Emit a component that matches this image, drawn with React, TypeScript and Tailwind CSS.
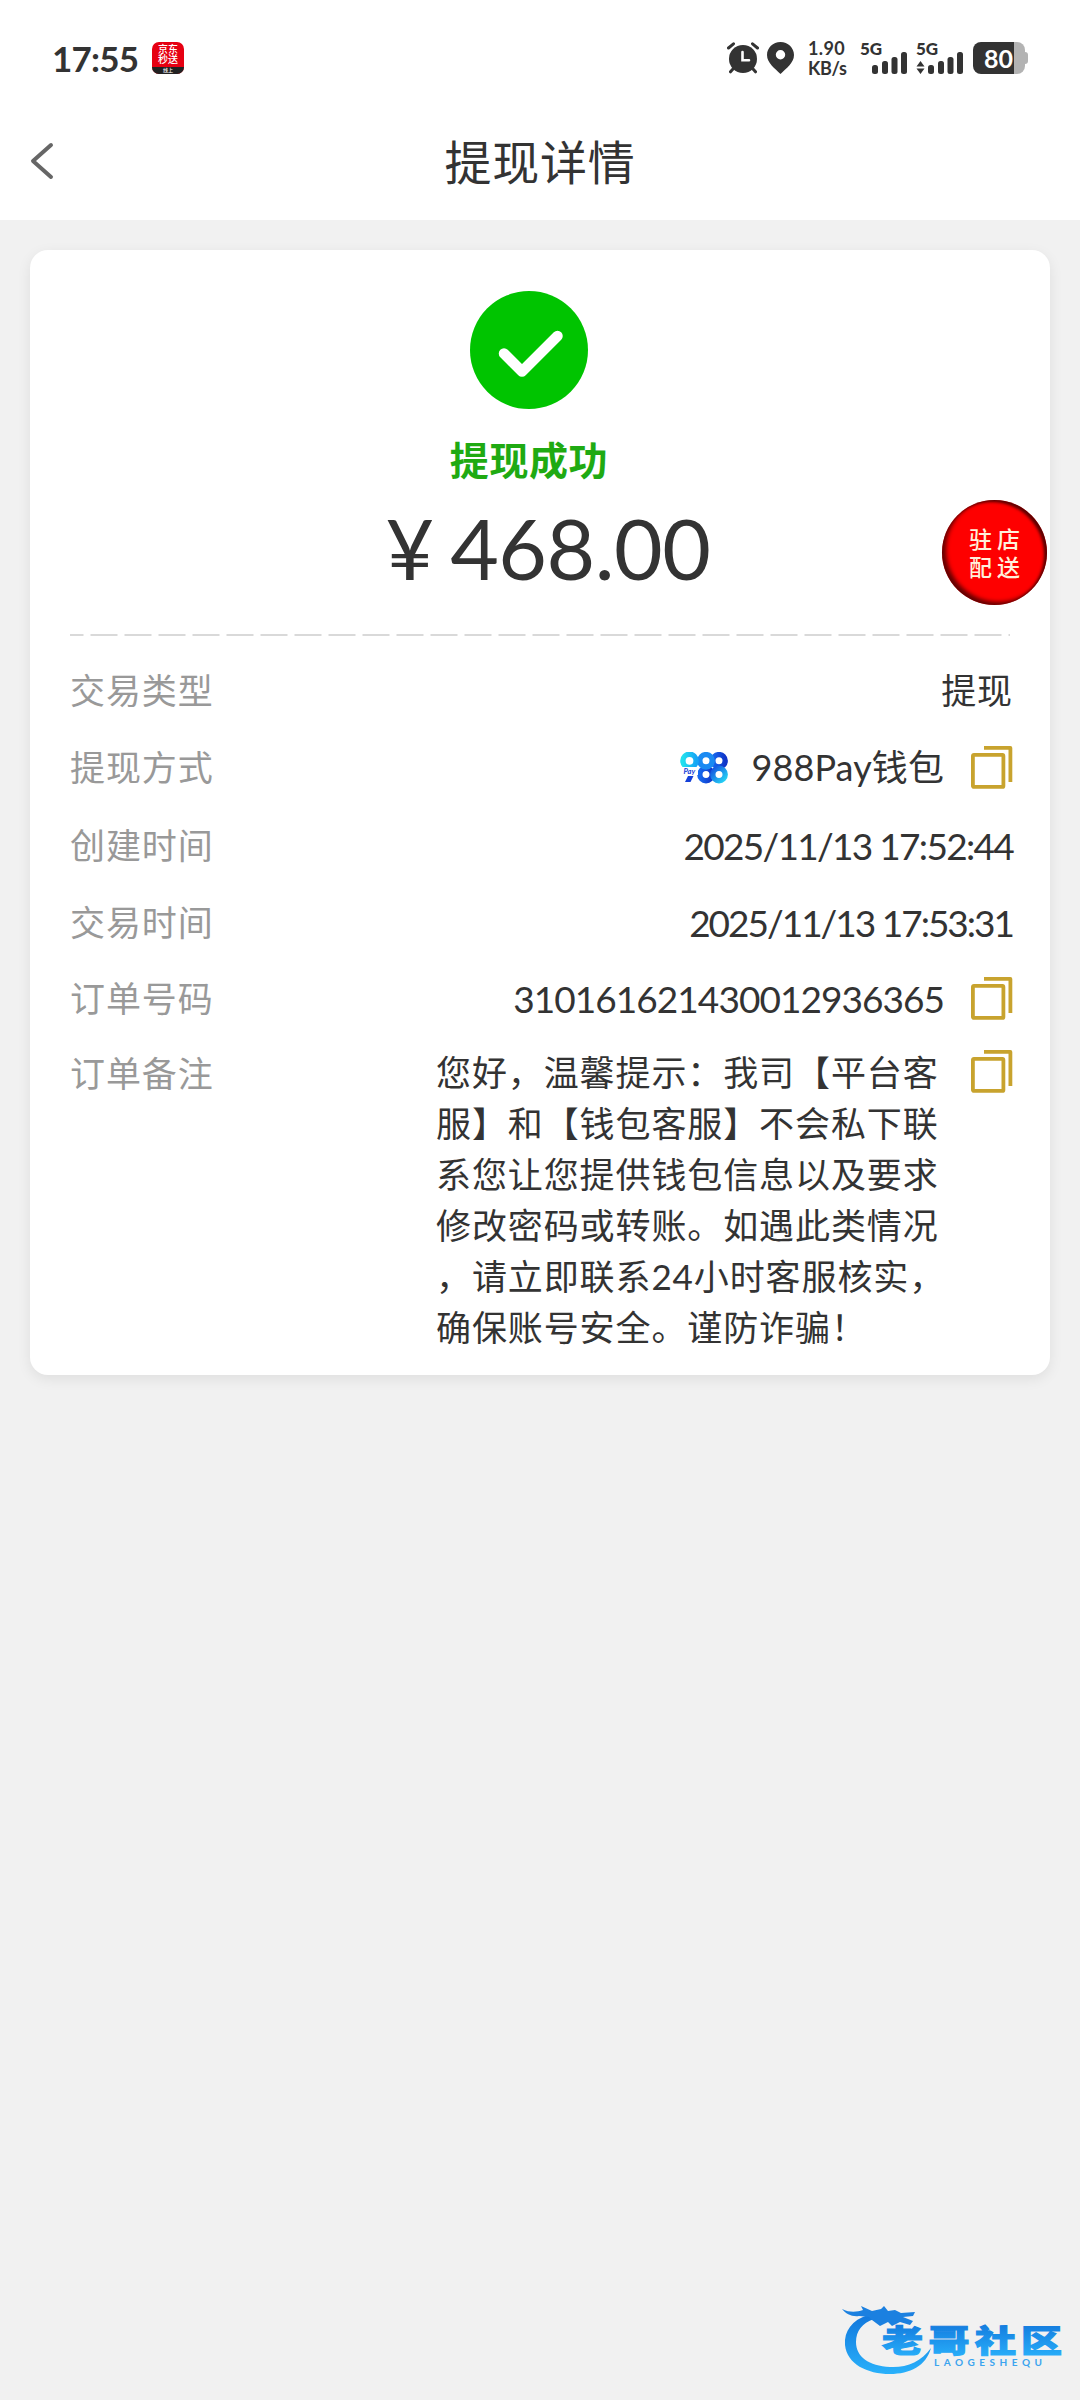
import React from 'react';

const note = [
  '您好，温馨提示：我司【平台客',
  '服】和【钱包客服】不会私下联',
  '系您让您提供钱包信息以及要求',
  '修改密码或转账。如遇此类情况',
  '，请立即联系24小时客服核实，',
  '确保账号安全。谨防诈骗！'
];

function CopyIcon() {
  return (
    <svg width="42" height="43" viewBox="0 0 42 43" fill="none" stroke="#c8a32e" strokeWidth="3.8">
      <rect x="1.9" y="8.9" width="30.5" height="32" rx="1" />
      <path d="M13 1.9H39.4V36" strokeLinejoin="round" />
    </svg>
  );
}

function AlarmIcon() {
  return (
    <svg width="32" height="32" viewBox="0 0 32 32" fill="none" stroke="#333" strokeLinecap="round">
      <circle cx="16" cy="17" r="14" fill="#333" stroke="none" />
      <path d="M1.5 6L6.5 1.8M30.5 6L25.5 1.8M6 27L3.5 29.8M26 27L28.5 29.8" strokeWidth="3" />
      <path d="M15.5 10V18.2H22" stroke="#fff" strokeWidth="2.6" />
    </svg>
  );
}

function PinIcon() {
  return (
    <svg width="27" height="32" viewBox="0 0 27 32">
      <path fillRule="evenodd" fill="#333" d="M13.5 0C6 0 0 5.700 0 13C0 21 8 26.500 13.500 32C19 26.500 27 21 27 13C27 5.700 21 0 13.500 0ZM13.500 8A4.700 4.700 0 1 1 13.500 17.400A4.700 4.700 0 1 1 13.500 8Z" />
    </svg>
  );
}

function Signal({ arrows = false }: { arrows?: boolean }) {
  return (
    <div className="relative h-[34px] w-[48px]">
      <span className="absolute left-0 top-0 text-[17px] font-black leading-[16px]">5G</span>
      <svg className="absolute left-0 top-0" width="48" height="34" viewBox="0 0 48 34" fill="#333">
        {arrows && <path d="M4.5 20L8.500 25.500H0.500ZM4.500 33L8.500 27.500H0.500Z" />}
        <rect x="12" y="24" width="6" height="9" rx="2.5" />
        <rect x="22" y="20" width="6" height="13" rx="2.5" />
        <rect x="31.5" y="16" width="6" height="17" rx="2.5" />
        <rect x="41" y="11" width="6" height="22" rx="2.5" />
      </svg>
    </div>
  );
}

function PayLogo() {
  return (
    <svg width="48" height="32" viewBox="0 0 48 32" fill="none" strokeWidth="5.4">
      <defs>
        <linearGradient id="nine" x1="0" y1="0" x2="1" y2="0">
          <stop offset="0" stopColor="#22e0ee" />
          <stop offset="1" stopColor="#16a5f5" />
        </linearGradient>
        <linearGradient id="blue" x1="0" y1="0" x2="1" y2="0">
          <stop offset="0" stopColor="#1668ee" />
          <stop offset="1" stopColor="#1035c8" />
        </linearGradient>
        <linearGradient id="cyan" x1="0" y1="0" x2="1" y2="1">
          <stop offset="0" stopColor="#1455e0" />
          <stop offset="1" stopColor="#25d4f5" />
        </linearGradient>
      </defs>
      <circle cx="39" cy="8.8" r="6.2" stroke="url(#blue)" />
      <circle cx="26" cy="22.5" r="6.2" stroke="url(#blue)" />
      <circle cx="26" cy="8.8" r="6.2" stroke="#1a8af2" />
      <circle cx="39" cy="22.5" r="6.2" stroke="url(#cyan)" />
      <circle cx="9.500" cy="8.8" r="6.6" stroke="url(#nine)" />
      <rect x="2" y="15" width="16" height="8" fill="#fff" />
      <path d="M5 30L8 24H13.500L10.500 30Z" fill="#1440d8" />
      <text x="3.500" y="21.500" fontSize="7.500" fontWeight="700" fontStyle="italic" fill="#1440d8" stroke="none">Pay</text>
    </svg>
  );
}

function Watermark() {
  return (
    <svg width="236" height="72" viewBox="0 0 236 72">
      <defs>
        <linearGradient id="wm" x1="0" y1="0" x2="0" y2="1">
          <stop offset="0" stopColor="#1277dc" />
          <stop offset="1" stopColor="#29b1fb" />
        </linearGradient>
      </defs>
      <path fill="url(#wm)" d="M26 9C10 14 2 25 3 39C5 58 25 68 48 68C68 68 84 60 89 42C79 56 64 62 48 61C27 60 14 51 14 36C14 25 20 17 32 13Z" />
      <path fill="#1b80e0" d="M0 3C8 7 15 6 21 4L19 0L30 5L39 3L42 0L46 5L53 4L59 7L73 6L71 10L61 11L71 15L68 19L58 16L50 20L46 16L38 20L30 14L27 11L17 10C10 11 4 8 0 3Z" />
      <g transform="translate(40 46) scale(1 .76)" fill="url(#wm)" stroke="url(#wm)" strokeWidth="1.5" fontSize="41" fontWeight="900">
        <text x="0">老</text>
        <text x="46.5">哥</text>
        <text x="93">社</text>
        <text x="139">区</text>
      </g>
      <text x="92" y="60" fontSize="10" fontWeight="700" fill="#3ba4ef" textLength="108">LAOGESHEQU</text>
    </svg>
  );
}

function Row({ label, className, children }: { label: string; className: string; children: React.ReactNode }) {
  return (
    <div className={`flex items-center justify-between ${className}`}>
      <span className="text-[35px] tracking-[0.9px] text-[#999]">{label}</span>
      <div className="flex items-center">{children}</div>
    </div>
  );
}

export default function App() {
  return (
    <div className="relative h-[2400px] w-[1080px] overflow-hidden bg-[#f1f1f1] font-['Lato','Noto_Sans_CJK_SC',sans-serif] text-[#333]">
      <header className="h-[220px] bg-white">
        <div className="flex h-[116px] items-center justify-between pl-[52px] pr-[52px]">
          <div className="flex items-center">
            <span className="w-[100px] text-[35px] font-bold leading-none tracking-[-0.8px]">17:55</span>
            <div className="flex h-[32px] w-[32px] flex-col items-center overflow-hidden rounded-[7px] bg-[#e60012] pt-[2px] text-[10px] font-medium leading-[10px] text-white">
              <span>京东</span>
              <span>秒送</span>
              <span className="mt-[3px] h-[8px] w-full bg-[#222] text-center text-[5px] leading-[6px]">线上</span>
            </div>
          </div>
          <div className="flex items-center">
            <AlarmIcon />
            <div className="w-[8px]" />
            <PinIcon />
            <div className="ml-[14px] w-[52px] whitespace-nowrap text-[18px] font-bold leading-[20px]">
              <div className="tracking-[0.4px]">1.90</div>
              <div className="tracking-[-0.3px]">KB/s</div>
            </div>
            <Signal />
            <div className="w-[8px]" />
            <Signal arrows />
            <div className="ml-[9px] flex items-center">
              <div className="flex h-[32px] w-[52px] items-center justify-end rounded-[8px] bg-[linear-gradient(90deg,#333_41px,#b3b3b3_41px)] pr-[12px] text-[25px] font-bold leading-none text-white">80</div>
              <div className="h-[12px] w-[3px] rounded-r bg-[#b3b3b3]" />
            </div>
          </div>
        </div>
        <div className="grid h-[92px] grid-cols-[1fr_auto_1fr] items-center pl-[30px] pr-[30px]">
          <svg className="mb-[2px]" width="24" height="38" viewBox="0 0 24 38" fill="none" stroke="#666" strokeWidth="4" strokeLinecap="round" strokeLinejoin="round">
            <path d="M21 3L3 19L21 35" />
          </svg>
          <h1 className="text-[47px] leading-none tracking-[0.8px]">提现详情</h1>
        </div>
      </header>

      <main className="mx-[30px] mt-[30px] h-[1125px] rounded-[18px] bg-white pl-[40px] pr-[37px] pt-[41px] shadow-[0_4px_14px_rgba(0,0,0,0.08)]">
        <div className="flex h-[343px] w-[940px] flex-col items-center">
          <svg className="mr-[23px]" width="118" height="118" viewBox="0 0 118 118">
            <circle cx="59" cy="59" r="59" fill="#00c400" />
            <path d="M34 62.500L52 80.500L87.500 45" fill="none" stroke="#fff" strokeWidth="10.500" strokeLinecap="round" strokeLinejoin="round" />
          </svg>
          <div className="mr-[22px] mt-[31px] text-[39px] font-bold leading-[40px] tracking-[0.6px] text-[#1faa12]">提现成功</div>
          <div className="mr-[-16px] mt-[26px] flex items-center text-[84px] leading-[84px]">
            <span className="mr-[16px]">¥</span>
            <span className="tracking-[-0.5px]">468.00</span>
          </div>
        </div>
        <div className="h-[2px] w-[940px] bg-[linear-gradient(90deg,#d9d9d9_27px,transparent_27px)] bg-[length:34px_2px] bg-[position:-13.5px_0]" />

        <div className="pt-[16px] text-[36px] leading-[51px]">
          <Row label="交易类型" className="h-[76px]">
            <span className="text-[35px] tracking-[0.9px]">提现</span>
          </Row>
          <Row label="提现方式" className="h-[79px]">
            <PayLogo />
            <span className="ml-[24px] mr-[27px] tracking-[0.1px]">988Pay钱包</span>
            <CopyIcon />
          </Row>
          <Row label="创建时间" className="h-[77px]">
            <span className="text-[37px] tracking-[-1.7px]">2025/11/13 17:52:44</span>
          </Row>
          <Row label="交易时间" className="h-[76px]">
            <span className="text-[37px] tracking-[-2px]">2025/11/13 17:53:31</span>
          </Row>
          <Row label="订单号码" className="h-[76px]">
            <span className="mr-[27px] text-[37px] tracking-[-0.95px]">310161621430012936365</span>
            <CopyIcon />
          </Row>
          <div className="flex items-start">
            <span className="mt-[12px] w-[366px] text-[35px] tracking-[0.9px] text-[#999]">订单备注</span>
            <div className="mt-[11px] w-[535px] text-[35px] tracking-[0.9px]">
              {note.map((line) => (
                <p key={line} className="whitespace-nowrap">{line}</p>
              ))}
            </div>
            <div className="mt-[14px] shrink-0">
              <CopyIcon />
            </div>
          </div>
        </div>
      </main>

      <div className="absolute left-[942px] top-[500px] flex h-[105px] w-[105px] flex-col items-center justify-center rounded-full bg-[#fe0000] text-[23px] font-medium leading-[28px] tracking-[5px] text-[#fff0dc] shadow-[inset_-3px_2px_3px_rgba(60,0,0,0.85),inset_4px_-3px_4px_rgba(60,0,0,0.8)]">
        <span className="mr-[-5px]">驻店</span>
        <span className="mr-[-5px]">配送</span>
      </div>

      <div className="absolute left-[842px] top-[2306px]">
        <Watermark />
      </div>
    </div>
  );
}
